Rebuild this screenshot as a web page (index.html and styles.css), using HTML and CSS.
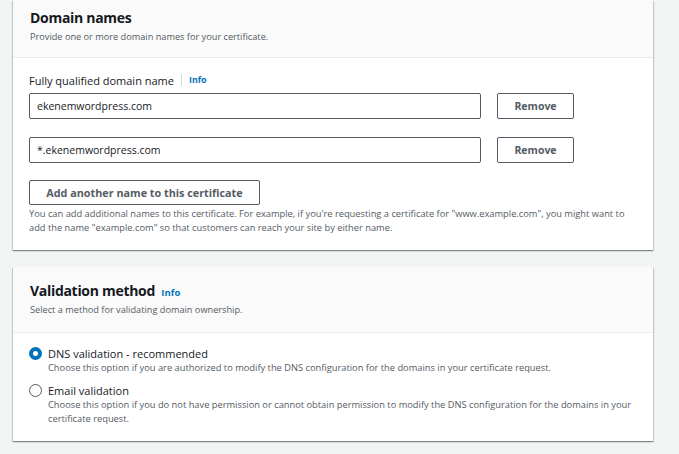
FILE: index.html
```html
<!DOCTYPE html>
<html>
<head>
<meta charset="utf-8">
<link rel="stylesheet" href="styles.css">
</head>
<body>
<div class="page">
  <section class="card card-first">
    <div class="card-header">
      <h2 class="title">Domain names</h2>
      <p class="subtitle">Provide one or more domain names for your certificate.</p>
    </div>
    <div class="card-body">
      <div class="label-row">
        <span class="label">Fully qualified domain name</span>
        <span class="sep"></span>
        <a class="info">Info</a>
      </div>
      <div class="field-row">
        <div class="input">ekenemwordpress.com</div>
        <button class="btn">Remove</button>
      </div>
      <div class="field-row">
        <div class="input">*.ekenemwordpress.com</div>
        <button class="btn">Remove</button>
      </div>
      <button class="btn btn-add">Add another name to this certificate</button>
      <p class="help">You can add additional names to this certificate. For example, if you're requesting a certificate for "www.example.com", you might want to add the name "example.com" so that customers can reach your site by either name.</p>
    </div>
  </section>

  <section class="card card-second">
    <div class="card-header">
      <h2 class="title">Validation method <a class="info info-title">Info</a></h2>
      <p class="subtitle">Select a method for validating domain ownership.</p>
    </div>
    <div class="card-body">
      <div class="radio">
        <span class="dot checked"></span>
        <div class="radio-text">
          <div class="radio-label">DNS validation - recommended</div>
          <div class="radio-desc">Choose this option if you are authorized to modify the DNS configuration for the domains in your certificate request.</div>
        </div>
      </div>
      <div class="radio">
        <span class="dot"></span>
        <div class="radio-text">
          <div class="radio-label">Email validation</div>
          <div class="radio-desc">Choose this option if you do not have permission or cannot obtain permission to modify the DNS configuration for the domains in your certificate request.</div>
        </div>
      </div>
    </div>
  </section>
</div>
</body>
</html>
```

FILE: styles.css
```css
* { box-sizing: border-box; }
html, body { margin: 0; padding: 0; }
body {
  background: #f2f3f3;
  font-family: "Open Sans", "Noto Sans", sans-serif;
  color: #16191f;
  width: 679px;
  height: 454px;
  overflow: hidden;
}
.page {
  padding: 0 26px 0 13px;
  display: flex;
  flex-direction: column;
  gap: 17px;
}
.card {
  background: #fff;
  box-shadow: 0 1px 1px 0 rgba(0,28,36,.3), 1px 1px 1px 0 rgba(0,28,36,.15), -1px 1px 1px 0 rgba(0,28,36,.15);
}
.card-header {
  background: #fafafa;
  border-bottom: 1px solid #eaeded;
  padding: 14px 17px 15px;
}
.card-first .card-header { padding: 8px 17px 13px; }
.title {
  margin: 0;
  font-size: 14px;
  font-weight: 700;
  letter-spacing: -0.3px;
  line-height: 20px;
}
.subtitle {
  margin: 0;
  font-size: 9.2px;
  line-height: 14px;
  color: #545b64;
}
.card-first .subtitle { margin-top: 2px; }
.card-body {
  padding: 15px 16px 15px 16px;
}
.card-second .card-body { padding-top: 13px; }
.info {
  color: #0073bb;
  font-size: 8.8px;
  font-weight: 700;
  letter-spacing: 0;
}
.info-title {
  font-size: 9.5px;
  margin-left: 3px;
}
.label-row {
  display: flex;
  align-items: center;
  height: 14px;
  margin-bottom: 6px;
}
.label { font-size: 11px; }
.sep {
  width: 1px;
  height: 12px;
  background: #d5dbdb;
  margin: 0 7px;
}
.field-row {
  display: flex;
  gap: 16px;
  margin-bottom: 18px;
}
.field-row + .field-row { margin-bottom: 17px; }
.input {
  width: 452px;
  height: 26px;
  border: 1px solid #545b64;
  border-radius: 2px;
  font-size: 10.5px;
  line-height: 24px;
  padding: 0 7px;
}
.btn {
  font-family: inherit;
  background: #fff;
  border: 1px solid #545b64;
  border-radius: 2px;
  color: #545b64;
  font-weight: 700;
  font-size: 10.5px;
  width: 77px;
  height: 26px;
  padding: 0;
}
.btn-add {
  width: 231px;
  height: 25px;
  display: block;
  font-size: 10.8px;
}
.help {
  margin: 2px 0 0;
  font-size: 9.3px;
  line-height: 14px;
  color: #545b64;
}
.radio {
  display: flex;
  gap: 6px;
  margin-bottom: 8px;
}
.radio:last-child { margin-bottom: 0; }
.dot {
  width: 13px;
  height: 13px;
  border-radius: 50%;
  border: 1px solid #545b64;
  margin-top: 1px;
  flex: none;
}
.dot.checked {
  border: 4px solid #0073bb;
}
.radio-label { font-size: 11px; line-height: 15px; }
.radio-desc { font-size: 9.3px; line-height: 14px; color: #545b64; }
```
